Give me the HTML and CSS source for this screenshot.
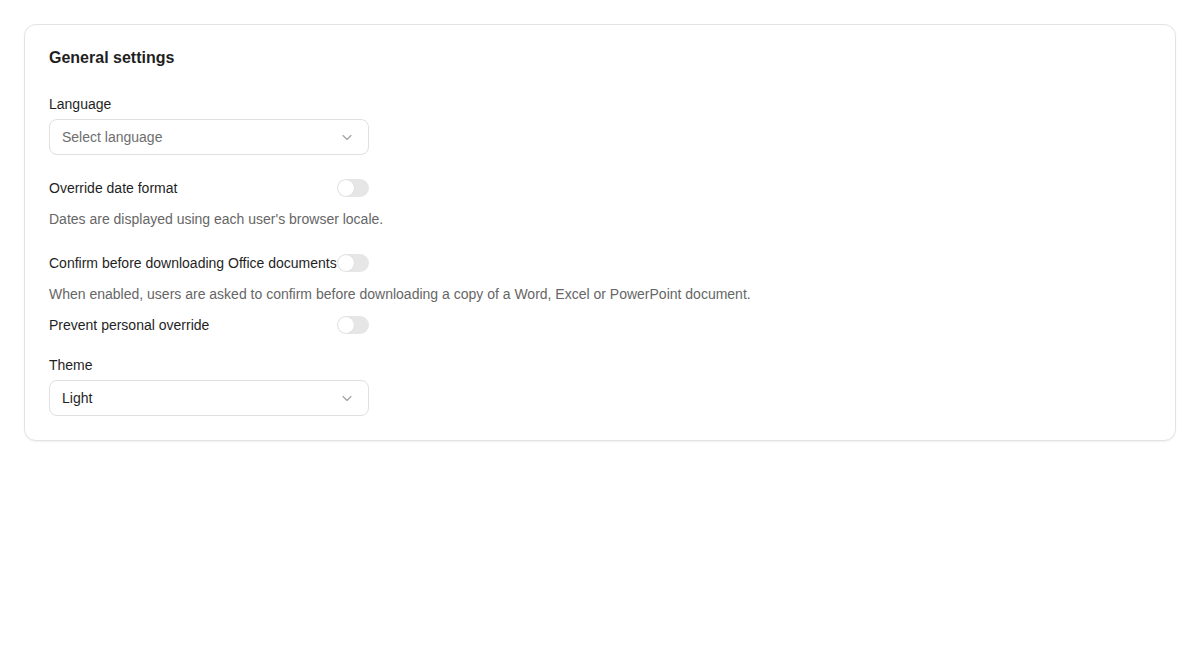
FILE: index.html
```html
<!DOCTYPE html>
<html lang="en">
<head>
<meta charset="utf-8">
<title>General settings</title>
<link rel="stylesheet" href="styles.css">
</head>
<body>
<section class="card">
  <h2 class="card-title">General settings</h2>

  <div class="field">
    <label class="field-label">Language</label>
    <div class="select">
      <span class="select-value placeholder">Select language</span>
      <svg class="chevron" width="12" height="12" viewBox="0 0 12 12" fill="none" stroke="currentColor" stroke-width="1.1" stroke-linecap="round" stroke-linejoin="round"><path d="M2 4.5 6 8.5 10 4.5"/></svg>
    </div>
  </div>

  <div class="toggle-row first">
    <span class="toggle-label">Override date format</span>
    <span class="switch"><span class="knob"></span></span>
  </div>
  <p class="desc">Dates are displayed using each user's browser locale.</p>

  <div class="toggle-row group-start">
    <span class="toggle-label">Confirm before downloading Office documents</span>
    <span class="switch"><span class="knob"></span></span>
  </div>
  <p class="desc">When enabled, users are asked to confirm before downloading a copy of a Word, Excel or PowerPoint document.</p>
  <div class="toggle-row sub">
    <span class="toggle-label">Prevent personal override</span>
    <span class="switch"><span class="knob"></span></span>
  </div>

  <div class="field theme">
    <label class="field-label">Theme</label>
    <div class="select">
      <span class="select-value">Light</span>
      <svg class="chevron" width="12" height="12" viewBox="0 0 12 12" fill="none" stroke="currentColor" stroke-width="1.1" stroke-linecap="round" stroke-linejoin="round"><path d="M2 4.5 6 8.5 10 4.5"/></svg>
    </div>
  </div>
</section>
</body>
</html>
```

FILE: styles.css
```css
* { box-sizing: border-box; }

html, body {
  margin: 0;
  padding: 0;
  background: #ffffff;
}

body {
  padding: 24px;
  font-family: "Liberation Sans", Arial, sans-serif;
  color: #1f1f1f;
}

.card {
  border: 1px solid #e3e3e3;
  border-radius: 12px;
  padding: 25px 24px 24px;
  background: #fff;
  box-shadow: 0 1px 2px rgba(0, 0, 0, 0.06);
}

.card-title {
  margin: 0 0 28px;
  font-size: 16px;
  line-height: 16px;
  font-weight: 700;
  color: #1f1f1f;
}

.field {
  display: flex;
  flex-direction: column;
  width: 320px;
}

.field-label {
  font-size: 14px;
  line-height: 20px;
  margin-bottom: 5px;
  color: #1f1f1f;
}

.select {
  display: flex;
  align-items: center;
  justify-content: space-between;
  height: 36px;
  padding: 0 15px 0 12px;
  border: 1px solid #e0e0e0;
  border-radius: 8px;
  background: #fff;
}

.select-value {
  font-size: 14px;
  color: #1f1f1f;
}

.select-value.placeholder {
  color: #6e6e6e;
}

.chevron {
  color: #a0a0a0;
}

.toggle-row {
  display: flex;
  align-items: center;
  justify-content: space-between;
  width: 320px;
  height: 20px;
}

.toggle-row.first {
  margin-top: 23px;
}

.toggle-row.group-start {
  margin-top: 24px;
}

.toggle-row.sub {
  margin-top: 11px;
}

.toggle-label {
  font-size: 14px;
  line-height: 20px;
  white-space: nowrap;
  color: #1f1f1f;
}

.switch {
  flex-shrink: 0;
  display: flex;
  align-items: center;
  width: 32px;
  height: 18px;
  padding: 1px;
  border-radius: 9px;
  background: #e6e6e6;
}

.knob {
  width: 16px;
  height: 16px;
  border-radius: 50%;
  background: #ffffff;
  box-shadow: 0 0 1px rgba(0, 0, 0, 0.15);
}

.desc {
  margin: 11px 0 0;
  font-size: 14px;
  line-height: 20px;
  color: #666666;
}

.field.theme {
  margin-top: 20px;
}
```
